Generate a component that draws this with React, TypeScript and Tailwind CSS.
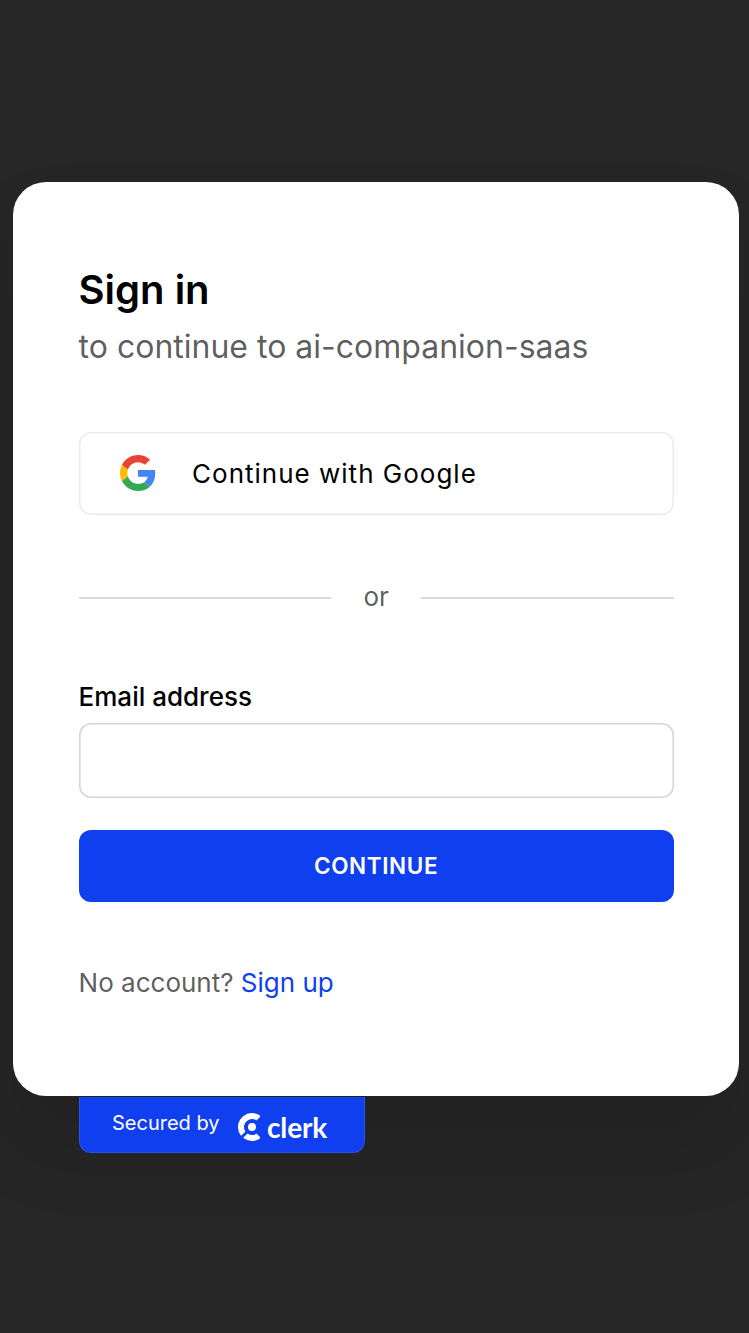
import React from "react";

function GoogleLogo() {
  return (
    <svg viewBox="0 0 48 48" className="mb-0.5 h-9 w-9 shrink-0" aria-hidden="true">
      <path fill="#EA4335" d="M24 9.5c3.54 0 6.71 1.22 9.21 3.6l6.85-6.85C35.9 2.38 30.47 0 24 0 14.62 0 6.51 5.38 2.56 13.22l7.98 6.19C12.43 13.72 17.74 9.5 24 9.5z" />
      <path fill="#4285F4" d="M46.98 24.55c0-1.57-.15-3.09-.38-4.55H24v9.02h12.94c-.58 2.96-2.26 5.48-4.78 7.18l7.73 6c4.51-4.18 7.09-10.36 7.09-17.65z" />
      <path fill="#FBBC05" d="M10.53 28.59c-.48-1.45-.76-2.99-.76-4.59s.27-3.14.76-4.59l-7.98-6.19C.92 16.46 0 20.12 0 24c0 3.88.92 7.54 2.56 10.78l7.97-6.19z" />
      <path fill="#34A853" d="M24 48c6.48 0 11.93-2.13 15.89-5.81l-7.73-6c-2.15 1.45-4.92 2.3-8.16 2.3-6.26 0-11.57-4.22-13.47-9.91l-7.98 6.19C6.51 42.62 14.62 48 24 48z" />
    </svg>
  );
}

function ClerkLogo() {
  return (
    <span className="flex items-center pt-1">
      <svg viewBox="2.35 0 19.3 24" className="h-7 w-[22.5px]" aria-hidden="true">
        <path
          fill="#fff"
          d="m21.47 20.829-2.881-2.881a.572.572 0 0 0-.7-.084 6.854 6.854 0 0 1-7.081 0 .576.576 0 0 0-.7.084l-2.881 2.881a.576.576 0 0 0-.103.69.57.57 0 0 0 .166.186 12 12 0 0 0 14.113 0 .58.58 0 0 0 .239-.423.576.576 0 0 0-.172-.453Zm.002-17.668-2.88 2.88a.569.569 0 0 1-.701.084A6.857 6.857 0 0 0 8.724 8.08a6.862 6.862 0 0 0-1.222 3.692 6.86 6.86 0 0 0 .978 3.764.573.573 0 0 1-.083.699l-2.881 2.88a.567.567 0 0 1-.864-.063A11.993 11.993 0 0 1 6.771 2.7a11.99 11.99 0 0 1 14.637-.405.566.566 0 0 1 .232.418.57.57 0 0 1-.168.448Zm-7.118 12.261a3.427 3.427 0 1 0 0-6.854 3.427 3.427 0 0 0 0 6.854Z"
        />
      </svg>
      <span className="ml-[7px] font-['Lato',sans-serif] text-[28px] leading-7 font-bold tracking-[-0.2px]">clerk</span>
    </span>
  );
}

export default function App() {
  return (
    <div className="min-h-[1333px] overflow-hidden bg-[#262626] pt-[182px] pl-[13px] font-['Inter',sans-serif]">
      <main className="h-[914px] w-[726px] rounded-[33px] bg-white px-[65.6px] pt-[84px] shadow-[0_50px_80px_rgba(0,0,0,0.12)]">
        <h1 className="text-[40px] leading-[48px] font-semibold text-black">Sign in</h1>
        <p className="mt-2.5 text-[32px] leading-[46px] text-black/65">to continue to ai-companion-saas</p>
        <button className="mt-[62px] flex h-[83px] w-[595px] items-center rounded-xl pl-[41px] text-[26px] tracking-[1px] text-black shadow-[inset_0_0_0_1.5px_rgba(0,0,0,0.08)]">
          <GoogleLogo />
          <span className="ml-[36.5px]">Continue with Google</span>
        </button>
        <div className="mt-[62px] flex h-10 w-[595px] items-center gap-8 text-[26px] text-black/65">
          <span className="mt-0.5 h-0.5 flex-1 bg-black/14" />
          <span className="-mt-0.5">or</span>
          <span className="mt-0.5 h-0.5 flex-1 bg-black/14" />
        </div>
        <label className="mt-[62px] block text-[26px] leading-[36px] font-medium text-black">
          Email address
          <input className="mt-2 block h-[75px] w-[595px] rounded-xl px-5 shadow-[inset_0_0_0_1.6px_rgba(0,0,0,0.16)] outline-none" />
        </label>
        <button className="mt-8 block h-[72px] w-[595px] rounded-xl bg-[#103fef] text-[22.5px] font-semibold tracking-[0.6px] text-white">CONTINUE</button>
        <p className="mt-[62px] text-[26px] leading-[38px] text-black/65">
          No account? <a className="text-[#103fef]">Sign up</a>
        </p>
      </main>
      <footer className="mt-px ml-[66px] flex h-14 w-[286px] items-center rounded-b-xl border border-t-0 border-white/10 bg-[#103fef] pl-8 text-[20px] text-white">
        <span className="mr-[18px] -mt-1">Secured by</span>
        <ClerkLogo />
      </footer>
    </div>
  );
}
